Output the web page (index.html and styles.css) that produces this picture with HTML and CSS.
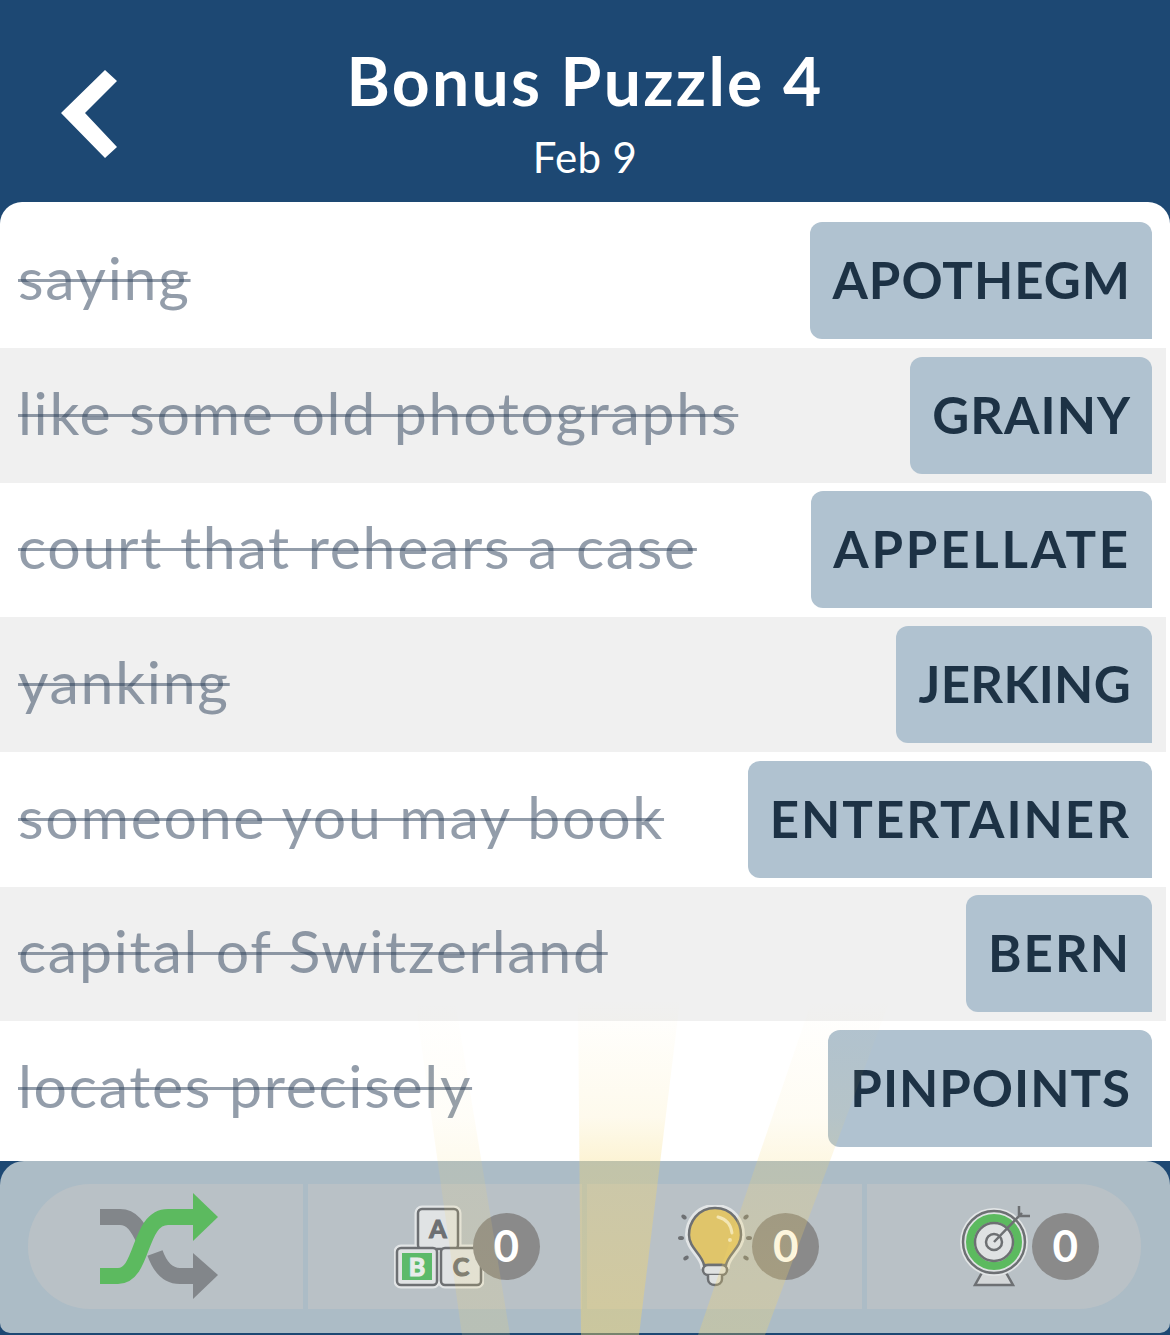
FILE: index.html
```html
<!DOCTYPE html>
<html lang="en">
<head>
  <meta charset="UTF-8">
  <meta name="viewport" content="width=device-width, initial-scale=1.0">
  <title>Bonus Puzzle 4</title>
  <link rel="stylesheet" href="styles.css">
</head>
<body>
  <div class="app">
    <div class="header">
      <svg class="back" width="56" height="88" viewBox="0 0 56 88">
        <polygon fill="#fff" points="0,43 44,0 56,11 24,43 56,77 44,88"/>
      </svg>
      <div class="title-block">
        <h1>Bonus Puzzle 4</h1>
        <div class="date">Feb 9</div>
      </div>
    </div>

    <div class="list">
      <div class="row"><span class="clue">saying</span><span class="answer">APOTHEGM</span></div>
      <div class="row"><span class="clue">like some old photographs</span><span class="answer">GRAINY</span></div>
      <div class="row"><span class="clue">court that rehears a case</span><span class="answer answer-wider">APPELLATE</span></div>
      <div class="row"><span class="clue">yanking</span><span class="answer answer-tight">JERKING</span></div>
      <div class="row"><span class="clue">someone you may book</span><span class="answer answer-wide">ENTERTAINER</span></div>
      <div class="row"><span class="clue">capital of Switzerland</span><span class="answer answer-wide">BERN</span></div>
      <div class="row"><span class="clue">locates precisely</span><span class="answer">PINPOINTS</span></div>
    </div>

    <div class="toolbar">
      <div class="tools">
        <div class="tool tool-shuffle">
          <svg width="120" height="108" viewBox="0 0 120 108">
            <g fill="none" stroke="#82868a" stroke-width="16">
              <path d="M0 24 H20 C32 24 38 34 44 47"/>
              <path d="M55 60 C60 74 68 83 80 83 H96"/>
            </g>
            <polygon fill="#82868a" points="93,60 118,82 93,106"/>
            <path fill="none" stroke="#5cba5f" stroke-width="16" d="M0 83 H18 C44 83 38 24 68 24 H96"/>
            <polygon fill="#5cba5f" points="93,0 118,24 93,48"/>
          </svg>
        </div>
        <div class="tool tool-blocks">
          <svg width="90" height="84" viewBox="0 0 90 84">
            <g stroke="#e2e5e6" stroke-width="7" stroke-linejoin="round">
              <rect x="24" y="4" width="40" height="40" rx="4"/>
              <rect x="3" y="43" width="40" height="37" rx="4"/>
              <rect x="47" y="43" width="40" height="37" rx="4"/>
            </g>
            <g fill="#e0e3e4" stroke="#6d7073" stroke-width="2.5">
              <rect x="24" y="4" width="40" height="40" rx="4"/>
              <rect x="3" y="43" width="40" height="37" rx="4"/>
              <rect x="47" y="43" width="40" height="37" rx="4"/>
            </g>
            <rect x="8" y="48" width="30" height="27" fill="#5cba6a"/>
            <text class="block-letter letter-dark" x="44" y="33">A</text>
            <text class="block-letter letter-light" x="23" y="71">B</text>
            <text class="block-letter letter-dark" x="67" y="71">C</text>
          </svg>
          <span class="badge badge-blocks">0</span>
        </div>
        <div class="tool tool-bulb">
          <svg width="74" height="84" viewBox="0 0 74 84">
            <g fill="#6d7073">
              <ellipse cx="6" cy="12" rx="3" ry="2" transform="rotate(35 6 12)"/>
              <ellipse cx="3" cy="33" rx="3" ry="2"/>
              <ellipse cx="8" cy="53" rx="3" ry="2" transform="rotate(-30 8 53)"/>
              <ellipse cx="68" cy="12" rx="3" ry="2" transform="rotate(-35 68 12)"/>
              <ellipse cx="71" cy="33" rx="3" ry="2"/>
              <ellipse cx="68" cy="53" rx="3" ry="2" transform="rotate(30 68 53)"/>
            </g>
            <path fill="none" stroke="#e2e5e6" stroke-width="8" d="M37 3 C20 3 11 17 11 30 C11 43 24 49 26 60 H48 C50 49 63 43 63 30 C63 17 54 3 37 3 Z"/>
            <path fill="#e0c56a" stroke="#6d7073" stroke-width="2.5" d="M37 3 C20 3 11 17 11 30 C11 43 24 49 26 60 H48 C50 49 63 43 63 30 C63 17 54 3 37 3 Z"/>
            <path fill="none" stroke="#f3e6b4" stroke-width="3" stroke-linecap="round" d="M40 12 C48 14 53 20 54 28"/>
            <circle cx="52" cy="35" r="2" fill="#f3e6b4"/>
            <rect x="25" y="60" width="24" height="10" rx="5" fill="#dfe2e2" stroke="#6d7073" stroke-width="2.5"/>
            <path fill="#dfe2e2" stroke="#6d7073" stroke-width="2.5" d="M30 70 V74 C30 82 44 82 44 74 V70"/>
          </svg>
          <span class="badge">0</span>
        </div>
        <div class="tool tool-target">
          <svg width="72" height="84" viewBox="0 0 72 84">
            <path d="M24 64 L15 80 H53 L44 64 Z" fill="#d4d7d8" stroke="#6d7073" stroke-width="2.5"/>
            <circle cx="34" cy="37" r="34" fill="#e2e5e6"/>
            <circle cx="34" cy="37" r="31" fill="#dfe2e3" stroke="#6d7073" stroke-width="2.5"/>
            <circle cx="34" cy="37" r="24" fill="none" stroke="#5cba5f" stroke-width="8"/>
            <circle cx="34" cy="37" r="19" fill="#dfe2e3" stroke="#6d7073" stroke-width="2.5"/>
            <circle cx="34" cy="37" r="8" fill="none" stroke="#6d7073" stroke-width="2.5"/>
            <path fill="none" stroke="#6d7073" stroke-width="2.5" d="M34 37 L62 8 M59 1 V11 H70"/>
          </svg>
          <span class="badge">0</span>
        </div>
      </div>
    </div>

    <svg class="beams" width="1170" height="335" viewBox="0 0 1170 335">
      <defs>
        <linearGradient id="beamFade" x1="0" y1="0" x2="0" y2="1">
          <stop offset="0" stop-color="#f5d566" stop-opacity="0"/>
          <stop offset="0.35" stop-color="#f5d566" stop-opacity="0.12"/>
          <stop offset="0.5" stop-color="#f5d566" stop-opacity="0.3"/>
          <stop offset="1" stop-color="#f5d566" stop-opacity="0.42"/>
        </linearGradient>
      </defs>
      <polygon fill="url(#beamFade)" points="578,0 680,0 639,335 581,335"/>
      <polygon class="beam-side" fill="url(#beamFade)" points="812,0 890,0 765,335 698,335"/>
      <polygon class="beam-faint" fill="url(#beamFade)" points="415,0 455,0 510,335 462,335"/>
    </svg>
  </div>
</body>
</html>
```

FILE: styles.css
```css
body {
  margin: 0;
  padding: 0;
  font-family: "Lato", "Open Sans", sans-serif;
}
.app {
  position: relative;
  width: 1170px;
  height: 1335px;
  overflow: hidden;
  background-color: #1d4873;
}
.header {
  height: 202px;
  display: grid;
  grid-template-columns: 1fr auto 1fr;
  color: white;
}
.back {
  margin: 70px 0 0 61px;
}
.title-block {
  text-align: center;
  padding-top: 42px;
}
.title-block h1 {
  margin: 0;
  font-size: 66px;
  line-height: 78px;
  font-weight: 700;
  letter-spacing: 2.3px;
}
.date {
  margin-top: 12px;
  font-size: 42px;
  line-height: 50px;
  letter-spacing: 0.4px;
}
.list {
  height: 959px;
  box-sizing: border-box;
  padding: 11.3px 4px 0 0;
  background-color: white;
  border-radius: 22px 22px 0 0;
}
.row {
  height: 134.67px;
  display: flex;
  justify-content: space-between;
  align-items: center;
  padding: 0 14px 0 18px;
}
.row:nth-child(even) {
  background-color: #f0f0f0;
}
.clue {
  padding-bottom: 6px;
  font-size: 59px;
  letter-spacing: 1.7px;
  color: rgba(40, 60, 85, 0.5);
  text-decoration: line-through;
  text-decoration-thickness: 3px;
}
.answer {
  height: 117px;
  box-sizing: border-box;
  padding: 0 21px 2px 22px;
  display: flex;
  align-items: center;
  font-size: 51px;
  font-weight: 700;
  letter-spacing: 1px;
  color: #1d3245;
  background-color: #b0c2d0;
  border-radius: 12px 12px 0 12px;
}
.answer-tight {
  letter-spacing: 0.3px;
}
.answer-wide {
  letter-spacing: 2px;
}
.answer-wider {
  letter-spacing: 2.8px;
}
.toolbar {
  position: absolute;
  left: 0;
  right: 0;
  top: 1161px;
  height: 172px;
  box-sizing: border-box;
  padding: 23px 29px 24px 28px;
  background-color: #acbcc6;
  border-radius: 24px 24px 10px 10px;
}
.tools {
  height: 125px;
  display: grid;
  grid-template-columns: repeat(4, 1fr);
  gap: 5px;
  border-radius: 62px;
  overflow: hidden;
}
.tool {
  display: flex;
  align-items: center;
  justify-content: center;
  background-color: #b9c1c6;
}
.tool-shuffle {
  padding-right: 10px;
}
.tool-blocks {
  padding-left: 44px;
}
.tool-bulb {
  padding-left: 49px;
}
.tool-target {
  padding-left: 51px;
}
.badge {
  flex: none;
  width: 67px;
  height: 67px;
  border-radius: 50%;
  background-color: #8a8a8a;
  color: white;
  font-size: 44px;
  font-weight: 700;
  line-height: 65px;
  text-align: center;
}
.badge-blocks {
  margin-left: -11px;
}
.block-letter {
  font-size: 25px;
  font-weight: 700;
  stroke-width: 1.2px;
  text-anchor: middle;
}
.letter-dark {
  fill: #6d7073;
  stroke: #6d7073;
}
.letter-light {
  fill: #e8ecea;
  stroke: #e8ecea;
}
.beam-side {
  opacity: 0.65;
}
.beam-faint {
  opacity: 0.4;
}
.beams {
  position: absolute;
  left: 0;
  top: 1000px;
}
```
